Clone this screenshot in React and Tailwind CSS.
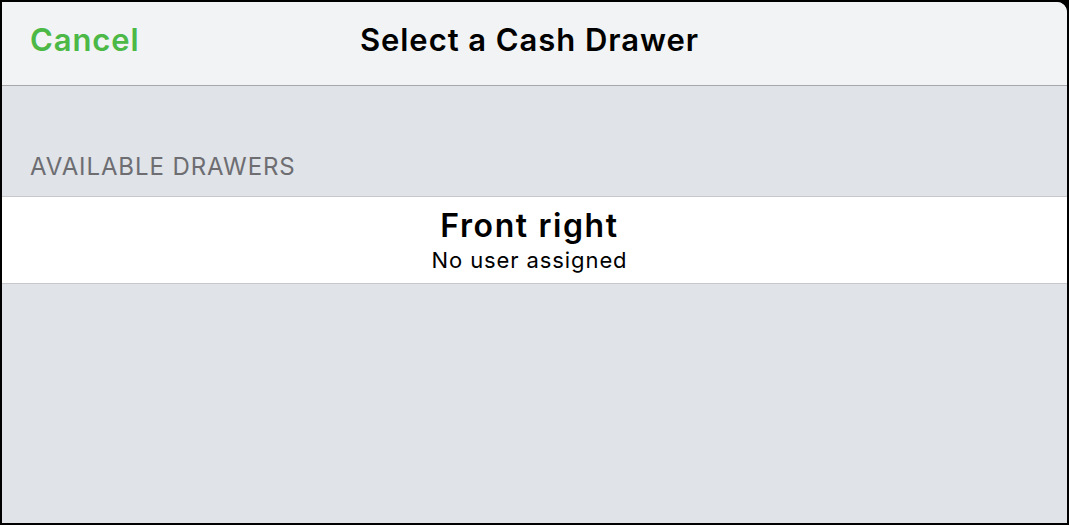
import React from 'react';

const drawers = [{ id: 1, name: 'Front right', user: null }];

const App = () => {
    return (
        <div className="w-[1069px] h-[525px] bg-black p-[2px] font-['Inter','Liberation_Sans',sans-serif]">
            <div className="w-full h-full bg-[#e0e3e7] rounded-tr-[10px] overflow-hidden flex flex-col">
                {/* Nav bar */}
                <div className="h-[84px] shrink-0 bg-[#f2f3f5] border-b border-[#a7a7aa] flex items-center justify-center relative pb-[6px] pr-[10px]">
                    <button className="absolute left-[28px] top-0 bottom-[6px] flex items-center text-[31px] font-semibold text-[#4cb846] tracking-[0.9px]">Cancel</button>
                    <h1 className="text-[31px] font-semibold text-black tracking-[0.95px]">Select a Cash Drawer</h1>
                </div>

                {/* Section */}
                <div className="pt-[66px] pb-[14px] px-[28px] text-[24px] text-[#6d6d72] tracking-[0.9px] leading-[30px]">
                    AVAILABLE DRAWERS
                </div>
                <div className="border-y border-[#c8c7cc] bg-white">
                    {drawers.map(d => (
                        <div key={d.id} className="h-[86px] flex flex-col items-center justify-center pt-[2px] pr-[10px]">
                            <div className="text-[32px] font-semibold text-black leading-[36px] tracking-[1.6px]">{d.name}</div>
                            <div className="text-[22px] text-black leading-[28px] mt-[2px] tracking-[0.9px]">{d.user || 'No user assigned'}</div>
                        </div>
                    ))}
                </div>
            </div>
        </div>
    );
};

export default App;
